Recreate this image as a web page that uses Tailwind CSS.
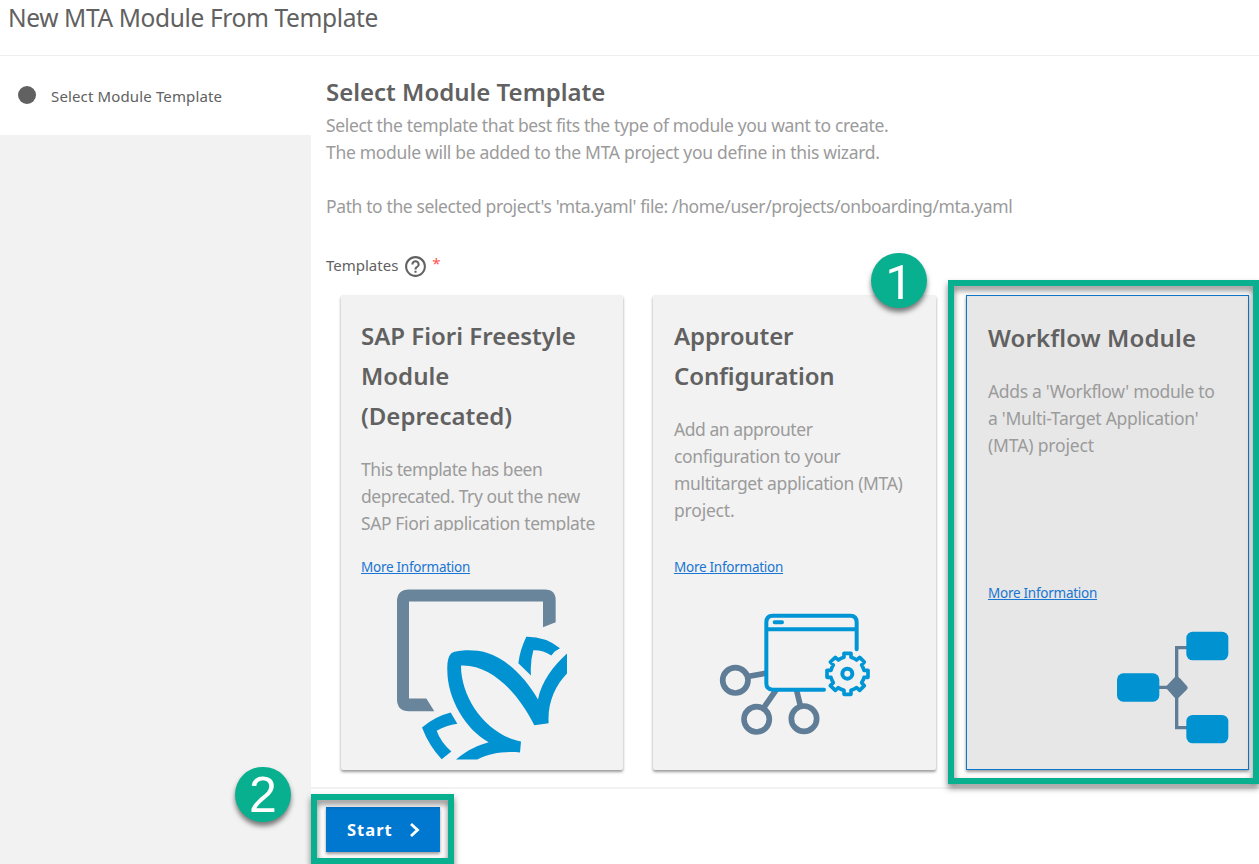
<!DOCTYPE html>
<html lang="en">
<head>
<meta charset="utf-8">
<title>New MTA Module From Template</title>
<script src="https://cdn.jsdelivr.net/npm/@tailwindcss/browser@4"></script>
</head>
<body class="bg-white">
<div class="relative flex h-[864px] w-[1259px] flex-col overflow-hidden bg-white font-['Noto_Sans','Open_Sans',sans-serif] text-[#616161]">
  <header class="flex h-14 shrink-0 items-start border-b border-[#efefef] pl-2">
    <h1 class="text-[24.5px] leading-[36px] tracking-[-0.37px] whitespace-nowrap">New MTA Module From Template</h1>
  </header>
  <div class="flex min-h-0 flex-1">
    <aside class="w-[311px] shrink-0 bg-[#f2f2f2]">
      <div class="flex h-[79px] items-center gap-[15px] bg-white pl-[18px]">
        <span class="mb-[2px] size-[18px] rounded-full bg-[#616161]"></span>
        <span class="pt-[2px] text-[15px] tracking-[0.14px] whitespace-nowrap">Select Module Template</span>
      </div>
    </aside>
    <div class="flex flex-1 flex-col">
      <main class="h-[731px] shrink-0 pt-[18px] pl-[15px]">
        <h2 class="text-[24px] leading-[36px] font-semibold whitespace-nowrap">Select Module Template</h2>
        <div class="mt-[2px] text-[17.5px] leading-[27px] whitespace-nowrap text-[#9b9b9b]">
          <p class="tracking-[-0.36px]">Select the template that best fits the type of module you want to create.</p>
          <p class="tracking-[-0.31px]">The module will be added to the MTA project you define in this wizard.</p>
          <p class="mt-[27px] tracking-[-0.385px]">Path to the selected project's 'mta.yaml' file: /home/user/projects/onboarding/mta.yaml</p>
        </div>
        <div class="mt-[33px] flex h-[24px] items-center">
          <span class="text-[15px]">Templates</span>
          <svg class="mt-[2px] ml-[5px] size-[25px]" viewBox="0 0 24 24" fill="#616161"><path d="M11 18h2v-2h-2v2zm1-16C6.48 2 2 6.48 2 12s4.48 10 10 10 10-4.48 10-10S17.52 2 12 2zm0 18c-4.41 0-8-3.59-8-8s3.59-8 8-8 8 3.59 8 8-3.59 8-8 8zm0-14c-2.21 0-4 1.79-4 4h2c0-1.1.9-2 2-2s2 .9 2 2c0 2-3 1.75-3 5h2c0-2.25 3-2.500 3-5 0-2.21-1.79-4-4-4z"/></svg>
          <span class="mb-[3px] ml-[4px] text-[15px] text-[#ff5252]">*</span>
        </div>
        <div class="mt-[18px] flex pl-[15px]">
          <section class="mr-[30px] h-[475px] w-[282px] rounded-[2px] bg-[#f2f2f2] px-5 pt-[21px] shadow-[0_2px_3px_rgba(0,0,0,0.4)]">
            <h3 class="text-[24px] leading-[40px] font-semibold whitespace-nowrap">SAP Fiori Freestyle<br>Module<br>(Deprecated)</h3>
            <p class="mt-[20px] h-[75px] overflow-hidden text-[17.5px] leading-[27px] whitespace-nowrap text-[#9b9b9b]"><span class="tracking-[-0.45px]">This template has been</span><br><span class="tracking-[-0.41px]">deprecated. Try out the new</span><br><span class="tracking-[-0.39px]">SAP Fiori application template</span></p>
            <a class="mt-[26px] block text-[13.5px] leading-[20px] tracking-[-0.26px] whitespace-nowrap text-[#1976d2] underline">More Information</a>
            <svg class="mt-[12px] ml-[36px] h-[171px] w-[170px]" viewBox="17 10 170 170">
              <g transform="scale(.33333)">
              <path fill="#68859c" d="M87 30H495Q527 30 527 62V128L489 143V66H87V357H139L163 395H87Q51 395 51 359V66Q51 30 87 30Z"/>
              <g fill="#0092d1"><path fill-rule="evenodd" d="M228 540C264 509 296 497 326 488C255 450 202 355 202 274Q200 235 214 221C233 211 285 209 320 220C385 239 439 300 474 360C484 306 521 258 561 222V282C525 319 502 371 506 431L463 437C418 347 338 254 243 258C242 355 319 467 423 486L420 519C374 515 327 521 292 540Z"/>
              <path d="M439 172Q495 171 540 206L524 216L514 228Q489 211 460 212Q450 246 453 288L415 251Q420 211 439 172ZM212 399L232 433Q199 438 170 454Q182 488 214 516L185 539Q148 501 126 444Q164 411 212 399Z"/></g></g>
            </svg>
          </section>
          <section class="mr-[30px] h-[475px] w-[283px] rounded-[2px] bg-[#f2f2f2] pt-[21px] pl-[21px] shadow-[0_2px_3px_rgba(0,0,0,0.4)]">
            <h3 class="text-[24px] leading-[40px] font-semibold tracking-[-0.12px] whitespace-nowrap">Approuter<br>Configuration</h3>
            <p class="mt-[20px] h-[115px] text-[17.5px] leading-[27px] whitespace-nowrap text-[#9b9b9b]"><span class="tracking-[-0.44px]">Add an approuter</span><br><span class="tracking-[-0.38px]">configuration to your</span><br><span class="tracking-[-0.35px]">multitarget application (MTA)</span><br><span class="tracking-[-0.2px]">project.</span></p>
            <a class="mt-[26px] block text-[13.5px] leading-[20px] tracking-[-0.26px] whitespace-nowrap text-[#1976d2] underline">More Information</a>
            <svg class="mt-[32px] ml-[44px] h-[130px] w-[160px]" viewBox="54 57 480 390" fill="none">
              <g stroke="#5f7d96" stroke-width="17"><circle cx="106" cy="271" r="38"/><circle cx="170" cy="388" r="38"/><circle cx="312" cy="386" r="38"/><path d="M147 259L196 250M192 352L229 299M301 347L290 302"/></g>
              <g stroke="#0096d6" stroke-width="12" stroke-linecap="round"><path d="M372 299H218Q199 299 199 280V97Q199 77 218 77H451Q470 77 470 97V178M199 118H470M224 97H246"/><circle cx="442" cy="251" r="15"/>
              <path stroke-width="11" stroke-linejoin="round" d="M432 190H453V202Q463 205 470 210L479 202L493 216L485 225Q490 233 492 241H504V262H492Q490 271 485 278L493 287L479 301L470 293Q462 298 453 301V313H432V301Q422 298 415 293L406 301L391 287L400 278Q395 270 393 262H381V241H393Q395 232 400 225L391 216L406 202L415 210Q422 205 432 202Z"/></g>
            </svg>
          </section>
          <section class="h-[475px] w-[283px] border border-[#0f78cb] bg-[#e7e7e7] pt-[22px] pl-[21px] shadow-[0_2px_3px_rgba(0,0,0,0.4)]">
            <h3 class="text-[24px] leading-[40px] font-semibold tracking-[0.13px] whitespace-nowrap">Workflow Module</h3>
            <p class="mt-[20px] h-[178px] text-[17.5px] leading-[27px] whitespace-nowrap text-[#9b9b9b]"><span class="tracking-[-0.33px]">Adds a 'Workflow' module to</span><br><span class="tracking-[-0.27px]">a 'Multi-Target Application'</span><br><span class="tracking-[-0.16px]">(MTA) project</span></p>
            <a class="mt-[27px] block text-[13.5px] leading-[20px] tracking-[-0.26px] whitespace-nowrap text-[#1976d2] underline">More Information</a>
            <svg class="mt-[26px] ml-[128px] h-[118px] w-[115px]" viewBox="78 87 345 354">
              <path fill="none" stroke="#5f7d96" stroke-width="10" d="M200 262H260M292 143H260V383H292"/><path fill="#5f7d96" d="M260 227Q264 227 290 257Q296 263 290 269L266 293Q260 299 254 293L226 262L254 232Q257 227 260 227Z"/>
              <g fill="#0092d1"><rect x="81" y="220" width="127" height="85" rx="19"/><rect x="289" y="95" width="126" height="86" rx="19"/><rect x="289" y="345" width="126" height="85" rx="19"/></g>
            </svg>
          </section>
        </div>
      </main>
      <footer class="flex-1 border-t-2 border-[#f2f2f2] pt-[18px] pl-[15px]">
        <button class="flex h-[45px] w-[114px] items-center bg-[#0078d0] pl-[21px] text-[16.5px] font-bold text-white shadow-[0_2px_3px_rgba(0,0,0,0.4)]"><span class="pt-[2px] tracking-[1px]">Start</span>
          <svg class="ml-[16px] h-[16px] w-[11px]" viewBox="0 0 11 16" fill="none" stroke="white" stroke-width="2.8"><path d="M2 2L8.5 8L2 14"/></svg>
        </button>
      </footer>
    </div>
  </div>
  <div class="absolute top-[280px] left-[948px] h-[504px] w-[311px] border-6 border-[#08b090] drop-shadow-[0_4px_3px_rgba(0,0,0,0.5)]"></div>
  <div class="absolute top-[794px] left-[311px] h-[70px] w-[143px] border-6 border-[#08b090] drop-shadow-[0_4px_3px_rgba(0,0,0,0.5)]"></div>
  <div class="absolute top-[253px] left-[871px] flex h-[55px] w-[56px] items-center justify-center rounded-full bg-[#08b090] font-['Roboto',sans-serif] text-[49px] leading-none text-white shadow-[0_4px_5px_rgba(0,0,0,0.5)]"><span class="pt-[4px]">1</span></div>
  <div class="absolute top-[767px] left-[235px] flex h-[55px] w-[56px] items-center justify-center rounded-full bg-[#08b090] font-['Liberation_Sans',sans-serif] text-[50px] leading-none text-white shadow-[0_4px_5px_rgba(0,0,0,0.5)]"><span>2</span></div>
</div>
</body>
</html>
